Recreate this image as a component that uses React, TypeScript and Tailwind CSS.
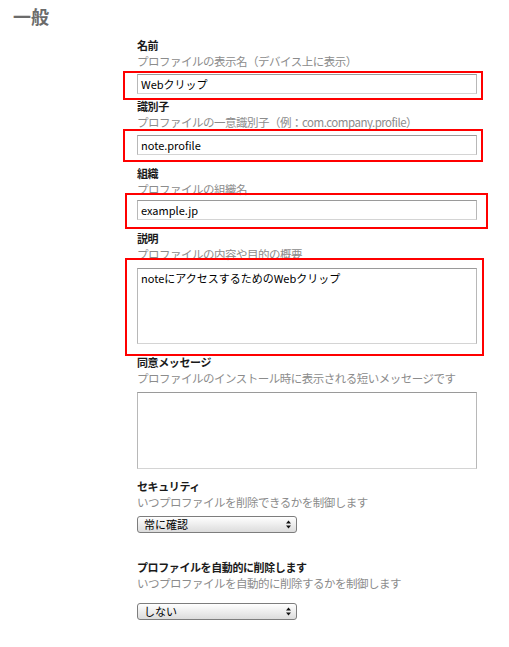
import React from "react";

const font = { fontFamily: '"Noto Sans CJK JP", "Noto Sans", sans-serif' };

function Label({ children, mt }: { children: React.ReactNode; mt: string }) {
  return (
    <div className={`${mt} text-[11px] leading-[16px] font-bold tracking-[-0.4px] text-[#1a1a1a] whitespace-nowrap`}>
      {children}
    </div>
  );
}

function Desc({ children }: { children: React.ReactNode }) {
  return (
    <div className="text-[11.5px] leading-[16px] tracking-[-0.5px] text-[#8c8c8c] whitespace-nowrap">{children}</div>
  );
}

function TextInput({ value, mt }: { value: string; mt: string }) {
  return (
    <div
      className={`${mt} w-[340px] h-[20px] border border-t-[#9a9a9a] border-l-[#b8b8b8] border-r-[#b8b8b8] border-b-[#d4d4d4] bg-white px-[3px] text-[11px] leading-[18px] text-black whitespace-nowrap`}
    >
      {value}
    </div>
  );
}

function TextArea({ value, mt, h }: { value: string; mt: string; h: string }) {
  return (
    <div
      className={`${mt} ${h} w-[340px] border border-t-[#9a9a9a] border-l-[#b8b8b8] border-r-[#b8b8b8] border-b-[#d4d4d4] bg-white px-[3px] pt-[1px] text-[11px] leading-[16px] text-black`}
    >
      {value}
    </div>
  );
}

function SelectBox({ value, mt }: { value: string; mt: string }) {
  return (
    <div
      className={`${mt} flex h-[17px] w-[160px] items-center justify-between rounded-[3px] border border-[#7d7d7d] bg-gradient-to-b from-[#ffffff] to-[#dcdcdc] pl-[6px] pr-[5px] text-[11px] leading-[15px] text-black`}
    >
      <span>{value}</span>
      <svg width="5" height="9" viewBox="0 0 5 9">
        <path d="M2.5 0.5 L5 3.5 L0 3.5 Z" fill="#111" />
        <path d="M0 5.5 L5 5.5 L2.5 8.5 Z" fill="#111" />
      </svg>
    </div>
  );
}

function RedBox({ cls }: { cls: string }) {
  return <div className={`absolute border-2 border-[#ff0000] pointer-events-none ${cls}`} />;
}

export default function App() {
  return (
    <div className="relative h-[647px] w-[509px] overflow-hidden bg-white" style={font}>
      <h2 className="pl-[13px] pt-[4px] text-[18px] leading-[24px] font-bold text-[#6b6b6b]">一般</h2>
      <div className="pl-[137px]">
        <Label mt="mt-[9px]">名前</Label>
        <Desc>プロファイルの表示名（デバイス上に表示）</Desc>
        <TextInput mt="mt-[5px]" value="Webクリップ" />

        <Label mt="mt-[4px]">識別子</Label>
        <Desc>プロファイルの一意識別子（例：com.company.profile）</Desc>
        <TextInput mt="mt-[5px]" value="note.profile" />

        <Label mt="mt-[10px]">組織</Label>
        <Desc>プロファイルの組織名</Desc>
        <TextInput mt="mt-[3px]" value="example.jp" />

        <Label mt="mt-[10px]">説明</Label>
        <Desc>プロファイルの内容や目的の概要</Desc>
        <TextArea mt="mt-[6px]" h="h-[76px]" value="noteにアクセスするためのWebクリップ" />

        <Label mt="mt-[10px]">同意メッセージ</Label>
        <Desc>プロファイルのインストール時に表示される短いメッセージです</Desc>
        <TextArea mt="mt-[6px]" h="h-[77px]" value="" />

        <Label mt="mt-[9px]">セキュリティ</Label>
        <Desc>いつプロファイルを削除できるかを制御します</Desc>
        <SelectBox mt="mt-[6px]" value="常に確認" />

        <Label mt="mt-[26px]">プロファイルを自動的に削除します</Label>
        <Desc>いつプロファイルを自動的に削除するかを制御します</Desc>
        <SelectBox mt="mt-[12px]" value="しない" />
      </div>

      <RedBox cls="left-[123px] top-[71px] w-[360px] h-[29px]" />
      <RedBox cls="left-[123px] top-[129px] w-[360px] h-[33px]" />
      <RedBox cls="left-[125px] top-[193px] w-[363px] h-[36px]" />
      <RedBox cls="left-[125px] top-[258px] w-[359px] h-[98px]" />
    </div>
  );
}
